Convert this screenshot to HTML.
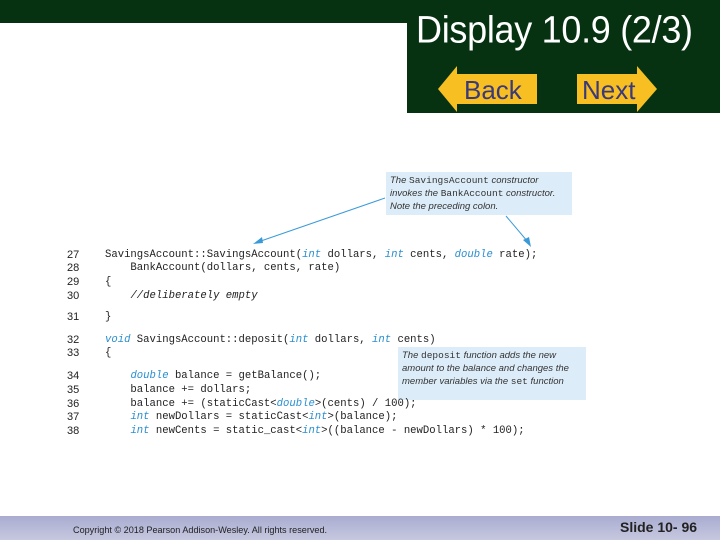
<!DOCTYPE html>
<html><head><style>
body{margin:0;width:720px;height:540px;position:relative;overflow:hidden;background:#fff;font-family:"Liberation Sans",sans-serif}
.top{position:absolute;left:0;top:0;width:720px;height:23px;background:#063212}
.box{position:absolute;left:407px;top:0;width:313px;height:113px;background:#063212}
.title{position:absolute;left:416px;top:8px;color:#fff;font-size:36px;letter-spacing:-0.3px;transform:scaleY(1.05);transform-origin:top left}
.code{position:absolute;font-family:"Liberation Mono",monospace;font-size:10.6px;color:#222;white-space:pre;line-height:12px}
.n{position:absolute;left:67px;font-family:"Liberation Sans",sans-serif;font-size:11px;color:#222}
.k{color:#2a8fd0;font-style:italic}
.c{font-style:italic}
.call{position:absolute;background:#dcecf8;font-size:9.5px;color:#333;font-style:italic;line-height:13px;padding:2px 4px;box-sizing:border-box}
.call b{font-style:normal;font-weight:normal;font-family:"Liberation Mono",monospace}
.foot{position:absolute;left:0;top:516px;width:720px;height:24px;background:linear-gradient(#a9acd0,#c6c8e0)}
</style></head><body>
<div class="top"></div><div class="box"></div>
<div class="title">Display 10.9 (2/3)</div>
<svg style="position:absolute;left:437px;top:64px" width="230" height="50">
<polygon points="1,25 20,2 20,10 100,10 100,40 20,40 20,48" fill="#f8bf22"/>
<text x="27" y="35" font-family="Liberation Sans" font-size="26" fill="#3a3a7a">Back</text>
<polygon points="140,10 200,10 200,2 220,25 200,48 200,40 140,40" fill="#f8bf22"/>
<text x="145" y="35" font-family="Liberation Sans" font-size="26" fill="#3a3a7a">Next</text>
</svg>
<div class="call" style="left:386px;top:172px;width:186px;height:43px">The <b>SavingsAccount</b> constructor<br>invokes the <b>BankAccount</b> constructor.<br>Note the preceding colon.</div>
<div class="call" style="left:398px;top:347px;width:188px;height:53px;padding-top:2px">The <b>deposit</b> function adds the new<br>amount to the balance and changes the<br>member variables via the <b>set</b> function</div>
<svg style="position:absolute;left:0;top:0" width="720" height="540">
<line x1="385" y1="198" x2="258" y2="242" stroke="#3a9ad8" stroke-width="1"/>
<polygon points="253,244 262,237 263,243" fill="#3a9ad8"/>
<line x1="506" y1="216" x2="528" y2="242" stroke="#3a9ad8" stroke-width="1"/>
<polygon points="531,247 523,240 529,237" fill="#3a9ad8"/>
</svg>
<div class="n" style="top:249px">27</div><div class="code" style="left:105px;top:249px">SavingsAccount::SavingsAccount(<span class="k">int</span> dollars, <span class="k">int</span> cents, <span class="k">double</span> rate);</div>
<div class="n" style="top:262px">28</div><div class="code" style="left:105px;top:262px">    BankAccount(dollars, cents, rate)</div>
<div class="n" style="top:276px">29</div><div class="code" style="left:105px;top:276px">{</div>
<div class="n" style="top:290px">30</div><div class="code" style="left:105px;top:290px">    <span class="c">//deliberately empty</span></div>
<div class="n" style="top:311px">31</div><div class="code" style="left:105px;top:311px">}</div>
<div class="n" style="top:334px">32</div><div class="code" style="left:105px;top:334px"><span class="k">void</span> SavingsAccount::deposit(<span class="k">int</span> dollars, <span class="k">int</span> cents)</div>
<div class="n" style="top:347px">33</div><div class="code" style="left:105px;top:347px">{</div>
<div class="n" style="top:370px">34</div><div class="code" style="left:105px;top:370px">    <span class="k">double</span> balance = getBalance();</div>
<div class="n" style="top:384px">35</div><div class="code" style="left:105px;top:384px">    balance += dollars;</div>
<div class="n" style="top:398px">36</div><div class="code" style="left:105px;top:398px">    balance += (staticCast&lt;<span class="k">double</span>&gt;(cents) / 100);</div>
<div class="n" style="top:411px">37</div><div class="code" style="left:105px;top:411px">    <span class="k">int</span> newDollars = staticCast&lt;<span class="k">int</span>&gt;(balance);</div>
<div class="n" style="top:425px">38</div><div class="code" style="left:105px;top:425px">    <span class="k">int</span> newCents = static_cast&lt;<span class="k">int</span>&gt;((balance - newDollars) * 100);</div>
<div class="foot"></div>
<div style="position:absolute;left:73px;top:525px;font-size:9.1px;color:#222">Copyright © 2018 Pearson Addison-Wesley.  All rights reserved.</div>
<div style="position:absolute;left:620px;top:519px;font-size:14px;font-weight:bold;color:#222">Slide 10- 96</div>
</body></html>
